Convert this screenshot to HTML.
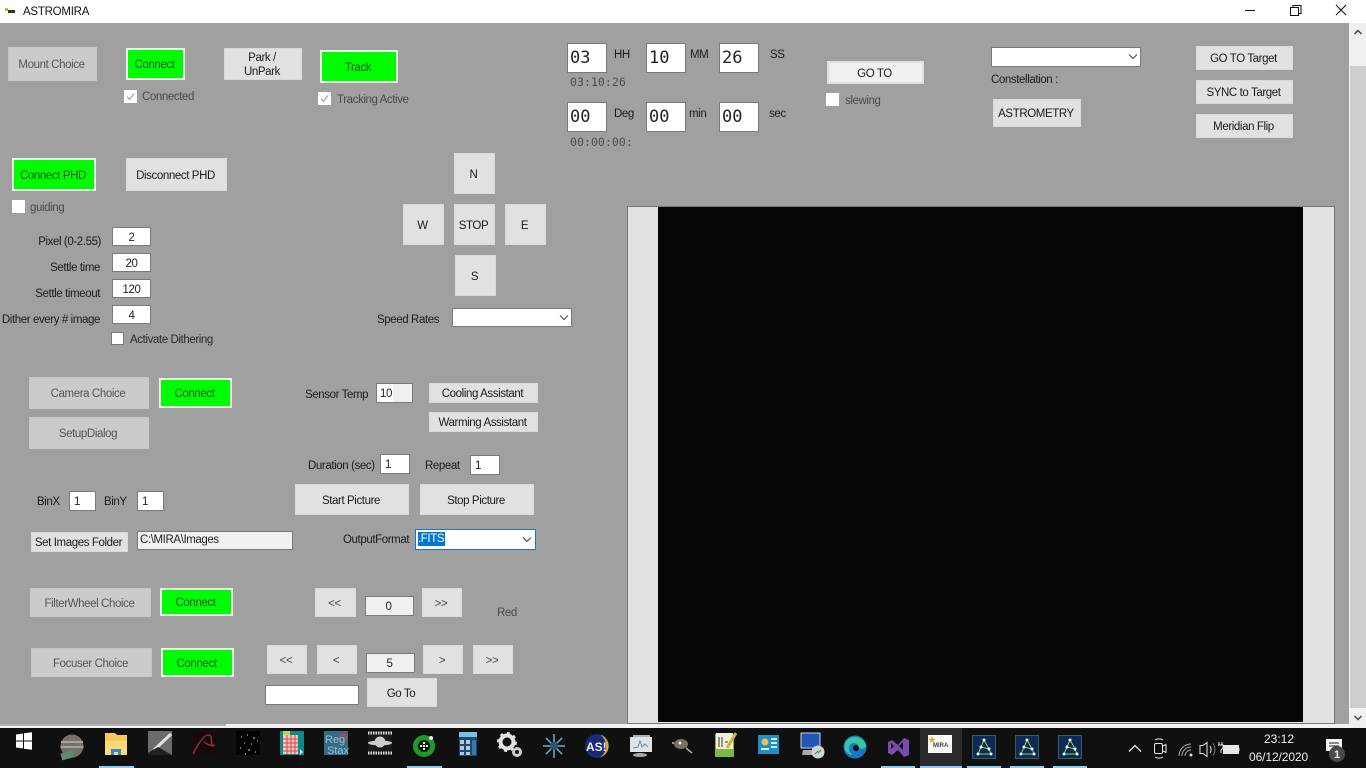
<!DOCTYPE html>
<html><head><meta charset="utf-8"><title>ASTROMIRA</title>
<style>
*{box-sizing:border-box}
html,body{margin:0;padding:0;width:1366px;height:768px;overflow:hidden;background:#a0a0a0;font:11.5px "Liberation Sans",sans-serif;letter-spacing:-.4px;color:#111}
div,span,svg{position:absolute}
svg text{letter-spacing:0}
.b{background:#e1e1e1;display:flex;align-items:center;justify-content:center;text-align:center;line-height:14px;color:#1a1a1a;border:1px solid #dadada;white-space:nowrap;padding-right:2px;padding-top:2px}
.d{background:#cbcbcb;color:#555;border-color:#c6c6c6}
.g{background:#00fc00;border:2px solid #e9f3e9;color:#1f5a1f;display:flex;align-items:center;justify-content:center;white-space:nowrap;padding-right:2px;padding-top:2px}
.t{white-space:nowrap;line-height:14px;color:#1c1c1c;margin-top:1px}
.m{color:#4a4a4a}
.i{background:#fff;border:1px solid #7a7a7a;display:flex;align-items:center;justify-content:center;color:#222;white-space:nowrap;padding-top:2px}
.l{justify-content:flex-start;padding-left:4px}
.n{background:#fff;border:1px solid #7a7a7a;font:17px "DejaVu Sans Mono","Liberation Mono",monospace;letter-spacing:0;display:flex;align-items:center;padding-left:2px;color:#222}
.c{background:#fff;width:13px;height:13px}
.cb{background:#fff;border:1px solid #7a7a7a}
.mono{font:11.600px "DejaVu Sans Mono","Liberation Mono",monospace;letter-spacing:0;color:#4e4e4e;white-space:nowrap}
.u{background:#8fcdf0;height:2px;top:766px}
</style></head><body>
<!-- title bar -->
<div style="left:0;top:0;width:1366px;height:23px;background:#fff"></div>
<div style="left:5px;top:8px;width:3px;height:3px;background:#e8a818"></div>
<div style="left:8px;top:10px;width:7px;height:3px;background:#333"></div>
<div class="t" style="left:23px;top:5px;margin-top:0;color:#111;letter-spacing:-.25px">ASTROMIRA</div>
<svg style="left:1239px;top:0" width="127" height="23" fill="none" stroke="#111"><path d="M6 10.500H16"/><path d="M51.500 7.500h8v8h-8zM54 7.500V5.500h8v8h-2.500"/><path d="M97 5l10 10M107 5L97 15" stroke-width="1.100"/></svg>

<!-- scrollbar -->
<div style="left:1349px;top:23px;width:1px;height:705px;background:#f4f4f4"></div>
<div style="left:1350px;top:23px;width:16px;height:705px;background:#f0f0f0"></div>
<div style="left:1350px;top:66px;width:16px;height:642px;background:#cdcdcd"></div>
<svg style="left:1350px;top:23px" width="16" height="705" fill="none" stroke="#444" stroke-width="1.500"><path d="M4.500 11L8 7.500 11.500 11M4.500 693L8 696.500 11.500 693"/></svg>

<!-- bottom edge -->
<div style="left:0;top:724px;width:1349px;height:4px;background:#f2f2f2"></div>
<div style="left:0;top:724px;width:226px;height:2px;background:#b4b4b4"></div>

<!-- mount row -->
<div class="b d" style="left:8px;top:47px;width:89px;height:34px">Mount Choice</div>
<div class="g" style="left:126px;top:48px;width:59px;height:32px">Connect</div>
<div class="b" style="left:224px;top:48px;width:78px;height:32px">Park /<br>UnPark</div>
<div class="g" style="left:320px;top:50px;width:78px;height:33px">Track</div>
<div class="c" style="left:124px;top:90px"></div>
<svg style="left:124px;top:90px" width="13" height="13" fill="none" stroke="#a8a8a8" stroke-width="1.300"><path d="M3 6.500L5.500 9.500 10 3.500"/></svg>
<div class="t m" style="left:142px;top:89px">Connected</div>
<div class="c" style="left:318px;top:92px"></div>
<svg style="left:318px;top:92px" width="13" height="13" fill="none" stroke="#a8a8a8" stroke-width="1.300"><path d="M3 6.500L5.500 9.500 10 3.500"/></svg>
<div class="t m" style="left:337px;top:92px">Tracking Active</div>

<!-- PHD -->
<div class="g" style="left:12px;top:158px;width:84px;height:33px">Connect PHD</div>
<div class="b" style="left:126px;top:158px;width:101px;height:33px">Disconnect PHD</div>
<div class="c" style="left:12px;top:200px"></div>
<div class="t m" style="left:30px;top:200px">guiding</div>

<div class="t" style="right:1265px;top:234px">Pixel (0-2.55)</div>
<div class="t" style="right:1266px;top:260px">Settle time</div>
<div class="t" style="right:1266px;top:286px">Settle timeout</div>
<div class="t" style="right:1266px;top:312px">Dither every # image</div>
<div class="i" style="left:112px;top:227px;width:39px;height:19px">2</div>
<div class="i" style="left:112px;top:253px;width:39px;height:19px">20</div>
<div class="i" style="left:112px;top:279px;width:39px;height:19px">120</div>
<div class="i" style="left:112px;top:305px;width:39px;height:19px">4</div>
<div class="c cb" style="left:111px;top:332px"></div>
<div class="t" style="left:130px;top:332px;color:#2a2a2a">Activate Dithering</div>

<!-- direction -->
<div class="b" style="left:454px;top:153px;width:41px;height:41px">N</div>
<div class="b" style="left:403px;top:204px;width:41px;height:41px">W</div>
<div class="b" style="left:454px;top:204px;width:41px;height:41px">STOP</div>
<div class="b" style="left:505px;top:204px;width:41px;height:41px">E</div>
<div class="b" style="left:455px;top:255px;width:41px;height:41px">S</div>
<div class="t" style="left:377px;top:312px">Speed Rates</div>
<div class="i" style="left:452px;top:308px;width:120px;height:19px"></div>
<svg style="left:558px;top:314px" width="12" height="8" fill="none" stroke="#444"><path d="M2 1.500L6 5.500 10 1.500"/></svg>

<!-- camera -->
<div class="b d" style="left:29px;top:377px;width:120px;height:32px">Camera Choice</div>
<div class="g" style="left:159px;top:378px;width:73px;height:30px">Connect</div>
<div class="b d" style="left:29px;top:417px;width:120px;height:32px">SetupDialog</div>
<div class="t" style="left:305px;top:387px">Sensor Temp</div>
<div class="i l" style="left:376px;top:383px;width:37px;height:20px;background:linear-gradient(90deg,#fff 45%,#f0f0f0 46%);padding-left:3px">10</div>
<div class="b" style="left:429px;top:383px;width:109px;height:20px">Cooling Assistant</div>
<div class="b" style="left:429px;top:412px;width:109px;height:20px">Warming Assistant</div>
<div class="t" style="left:308px;top:458px">Duration (sec)</div>
<div class="i l" style="left:380px;top:454px;width:30px;height:20px">1</div>
<div class="t" style="left:425px;top:458px">Repeat</div>
<div class="i l" style="left:470px;top:455px;width:30px;height:20px">1</div>
<div class="b" style="left:295px;top:484px;width:114px;height:31px">Start Picture</div>
<div class="b" style="left:420px;top:484px;width:114px;height:31px">Stop Picture</div>
<div class="t" style="left:37px;top:494px">BinX</div>
<div class="i l" style="left:69px;top:491px;width:27px;height:20px">1</div>
<div class="t" style="left:104px;top:494px">BinY</div>
<div class="i l" style="left:137px;top:491px;width:27px;height:20px">1</div>
<div class="b" style="left:31px;top:532px;width:97px;height:20px">Set Images Folder</div>
<div class="i l" style="left:137px;top:531px;width:156px;height:19px;background:#f0f0f0;padding-left:2px;padding-top:0;padding-bottom:2px">C:\MIRA\Images</div>
<div class="t" style="left:343px;top:532px">OutputFormat</div>
<div class="i" style="left:415px;top:529px;width:121px;height:21px;border-color:#1a78b8"></div>
<div style="left:418px;top:532px;width:27px;height:14px;background:#0078d7;color:#fff;line-height:14px;white-space:nowrap">.FITS</div>
<svg style="left:521px;top:536px" width="12" height="8" fill="none" stroke="#444"><path d="M2 1.500L6 5.500 10 1.500"/></svg>

<!-- filter / focuser -->
<div class="b d" style="left:30px;top:588px;width:121px;height:29px">FilterWheel Choice</div>
<div class="g" style="left:160px;top:588px;width:73px;height:28px">Connect</div>
<div class="b d" style="left:31px;top:648px;width:121px;height:29px">Focuser Choice</div>
<div class="g" style="left:161px;top:648px;width:73px;height:29px">Connect</div>
<div class="b" style="left:315px;top:588px;width:41px;height:29px;color:#444">&lt;&lt;</div>
<div class="i" style="left:365px;top:596px;width:49px;height:20px;background:#f0f0f0;padding-right:2px">0</div>
<div class="b" style="left:422px;top:588px;width:40px;height:29px;color:#444">&gt;&gt;</div>
<div class="t m" style="left:497px;top:605px">Red</div>
<div class="b" style="left:267px;top:645px;width:40px;height:29px;color:#444">&lt;&lt;</div>
<div class="b" style="left:317px;top:645px;width:40px;height:29px;color:#444">&lt;</div>
<div class="i" style="left:366px;top:653px;width:49px;height:20px;background:#f0f0f0;padding-right:2px">5</div>
<div class="b" style="left:423px;top:645px;width:40px;height:29px;color:#444">&gt;</div>
<div class="b" style="left:473px;top:645px;width:40px;height:29px;color:#444">&gt;&gt;</div>
<div class="i" style="left:265px;top:685px;width:94px;height:20px"></div>
<div class="b" style="left:367px;top:678px;width:70px;height:29px">Go To</div>

<!-- coordinates -->
<div class="n" style="left:567px;top:43px;width:40px;height:30px">03</div>
<div class="t" style="left:614px;top:47px">HH</div>
<div class="n" style="left:646px;top:43px;width:40px;height:30px">10</div>
<div class="t" style="left:690px;top:47px">MM</div>
<div class="n" style="left:719px;top:43px;width:40px;height:30px">26</div>
<div class="t" style="left:770px;top:47px">SS</div>
<div class="mono" style="left:570px;top:75px">03:10:26</div>
<div class="n" style="left:567px;top:102px;width:40px;height:30px">00</div>
<div class="t" style="left:614px;top:106px">Deg</div>
<div class="n" style="left:646px;top:102px;width:40px;height:30px">00</div>
<div class="t" style="left:689px;top:106px">min</div>
<div class="n" style="left:719px;top:102px;width:40px;height:30px">00</div>
<div class="t" style="left:769px;top:106px">sec</div>
<div class="mono" style="left:570px;top:135px">00:00:00:</div>
<div class="b" style="left:827px;top:61px;width:97px;height:23px;background:#f0f0f0;border:2px solid #e0e0e0">GO TO</div>
<div class="c" style="left:826px;top:93px"></div>
<div class="t m" style="left:845px;top:93px">slewing</div>

<div class="i" style="left:991px;top:47px;width:150px;height:20px"></div>
<svg style="left:1127px;top:53px" width="12" height="8" fill="none" stroke="#444"><path d="M2 1.500L6 5.500 10 1.500"/></svg>
<div class="t" style="left:991px;top:72px">Constellation :</div>
<div class="b" style="left:993px;top:99px;width:88px;height:28px">ASTROMETRY</div>
<div class="b" style="left:1196px;top:46px;width:97px;height:24px">GO TO Target</div>
<div class="b" style="left:1196px;top:80px;width:97px;height:24px">SYNC to Target</div>
<div class="b" style="left:1196px;top:114px;width:97px;height:24px">Meridian Flip</div>

<!-- picture -->
<div style="left:627px;top:206px;width:708px;height:518px;background:#e1e1e1;border:1px solid #777"></div>
<div style="left:658px;top:207px;width:645px;height:515px;background:#060606"></div>

<!-- taskbar -->
<div style="left:0;top:728px;width:1366px;height:40px;background:#101010"></div>
<div style="left:920px;top:728px;width:42px;height:40px;background:#2b2b2b"></div>
<div class="u" style="left:99px;width:35px"></div>
<div class="u" style="left:407px;width:35px"></div>
<div class="u" style="left:881px;width:34px"></div>
<div class="u" style="left:920px;width:42px"></div>
<div class="u" style="left:967px;width:34px"></div>
<div class="u" style="left:1010px;width:34px"></div>
<div class="u" style="left:1053px;width:34px"></div>

<svg style="left:0;top:728px" width="1366" height="40">
<!-- windows -->
<path d="M16 6.500l7-1v7h-7zM24 5.300l8-1.100v8.300h-8zM16 13.500h7v7l-7-1zM24 13.500h8v8.300l-8-1.100z" fill="#fff"/>
<!-- jupiter -->
<circle cx="72" cy="18" r="11.500" fill="#77706a"/><path d="M61 14h22M60.500 19h23" stroke="#a8a39c" stroke-width="2"/><rect x="61" y="24" width="13" height="7" fill="#5c8a72" transform="rotate(-15 67 27)"/>
<!-- folder -->
<path d="M105 5h10l2 2h10v20h-22z" fill="#f6c95c"/><path d="M105 13h22v14h-22z" fill="#fbd978"/><path d="M111 27v-6h10v6h-3v-3h-4v3z" fill="#2f8ac8"/>
<!-- comet -->
<rect x="148" y="3" width="24" height="24" fill="#6b6b6b"/><path d="M154 22L171 6" stroke="#e4e4e4" stroke-width="3"/><path d="M148 25l10-6 14 8h-24z" fill="#222"/>
<!-- red curve -->
<rect x="192" y="3" width="24" height="24" fill="#180a0c"/><path d="M193 26C198 16 204 6 209 7c4 1 1 8 4 12M204 14c4 3 8 4 11 3" fill="none" stroke="#8c3038" stroke-width="1.500"/>
<!-- stars -->
<rect x="236" y="3" width="24" height="24" fill="#040404"/><path d="M241 9h1M247 7h1M253 10h2M244 15h1M251 16h1M257 13h1M240 20h1M248 22h2M255 24h1M245 26h1" stroke="#ddd"/>
<!-- grid -->
<rect x="280" y="3" width="24" height="24" fill="#0c8b86"/><rect x="283" y="7" width="15" height="19" fill="#f0c8c8"/><path d="M283 11h15M283 15h15M283 19h15M283 23h15M287 7v19M291 7v19M295 7v19" stroke="#d84848" stroke-width="1"/><rect x="283" y="3" width="7" height="4" fill="#b8d850"/><path d="M300 21l3 3-3 3z" fill="#dde"/>
<!-- registax -->
<rect x="324" y="3" width="24" height="24" fill="#3a6a80"/><circle cx="343" cy="10" r="3.500" fill="none" stroke="#c04858" stroke-width="1.500"/>
<text x="325" y="15" font-family="Liberation Sans,sans-serif" font-size="11" fill="#7fc8e8">Reg</text><text x="327" y="26" font-family="Liberation Sans,sans-serif" font-size="11" fill="#7fc8e8">Stax</text>
<!-- saturn -->
<rect x="368" y="3" width="24" height="24" fill="#1a1a1a"/><path d="M368 5h24M368 25h24" stroke="#ddd" stroke-width="3" stroke-dasharray="1.500 1"/><ellipse cx="380" cy="15" rx="12" ry="2.500" fill="#ccc"/><circle cx="380" cy="14" r="5.500" fill="#ccc"/>
<!-- green ring -->
<circle cx="424" cy="18" r="11" fill="#1f9a2a"/><circle cx="424" cy="18" r="6" fill="#0c1a0c"/><path d="M420 18h8M424 14v8" stroke="#ddd" stroke-dasharray="2 1" stroke-width="2"/><circle cx="431" cy="10" r="2" fill="#eee"/>
<!-- calculator -->
<rect x="459" y="4" width="18" height="24" fill="#1c4a70"/><rect x="459" y="4" width="18" height="5" fill="#7fc0e0"/><path d="M460 12h4v4h-4zM466 12h4v4h-4zM460 18h4v4h-4zM466 18h4v4h-4zM460 24h4v3h-4zM466 24h4v3h-4z" fill="#b8c8d4"/><path d="M472 12h4v15h-4z" fill="#3878a8"/>
<!-- gears -->
<circle cx="507" cy="14" r="6.500" fill="none" stroke="#dfe3e6" stroke-width="4"/><circle cx="517" cy="24" r="3.500" fill="none" stroke="#c9cdd0" stroke-width="3"/><circle cx="507" cy="14" r="9" fill="none" stroke="#dfe3e6" stroke-width="2" stroke-dasharray="3 4"/>
<!-- star -->
<path d="M554 6v24M543 18h22M546 10l16 16M562 10l-16 16" stroke="#6fb0c8" stroke-width="1.500"/><circle cx="554" cy="18" r="4" fill="#2a5868"/>
<!-- AS! -->
<circle cx="597" cy="18" r="12" fill="#1a2a78"/><path d="M600 6.500a12 12 0 0 1 0 23a14 14 0 0 0 0-23z" fill="#d8a838"/><text x="586" y="23" font-family="Liberation Sans,sans-serif" font-size="12" font-weight="bold" fill="#f0f0f0">AS!</text>
<!-- monitor -->
<rect x="633" y="7" width="17" height="15" fill="#b0b0b0"/><rect x="630" y="9" width="22" height="15" fill="#dfe4e8"/><path d="M633 20l5-1 2-6 2 6 3-3 3 3" fill="none" stroke="#6a8aa8"/><ellipse cx="640" cy="27" rx="7" ry="2" fill="#aaa"/>
<!-- gimp -->
<ellipse cx="681" cy="16" rx="7" ry="5" fill="#77705c"/><circle cx="673" cy="15" r="1" fill="#bbb"/><circle cx="680" cy="15" r="1.500" fill="#eee"/><path d="M686 20l6 5" stroke="#aaa" stroke-width="1.500"/>
<!-- notepad -->
<rect x="715" y="6" width="19" height="23" fill="#7cb848"/><rect x="716" y="5" width="17" height="16" fill="#f0f0d8"/><path d="M719 9v10M722 9v10M725 14h3" stroke="#333"/><path d="M727 20l9-15" stroke="#d8b030" stroke-width="3"/>
<!-- blue card -->
<rect x="758" y="7" width="21" height="19" fill="#1f8ecb"/><circle cx="765" cy="14" r="3.500" fill="#f0c040"/><path d="M771 11h6M771 15h6M771 19h6M761 21h8" stroke="#d8eef8" stroke-width="2"/>
<!-- remote -->
<rect x="801" y="5" width="19" height="15" fill="#2058b8"/><rect x="801" y="5" width="19" height="15" fill="none" stroke="#c8d4e8"/><path d="M803 22h16l2 5h-19z" fill="#aaa"/><circle cx="818" cy="24" r="6.500" fill="#cfd4d0"/><path d="M815 26l3-3M818 25l3-3" stroke="#3a8a3a"/>
<!-- edge -->
<circle cx="855" cy="19" r="11.500" fill="#1578c8"/><path d="M845 15a11.500 11.500 0 0 1 21 2c0 5-8 5-8 1 0-2-4-4-7-2-3 2-3 8 2 11-6 0-10-6-8-12z" fill="#38c8a0"/><circle cx="856" cy="20" r="3" fill="#101010"/>
<!-- vs -->
<path d="M888 14l4-2 6 5 6-7 5 2v15l-5 2-6-7-6 5-4-2z" fill="#7a4cb0"/><path d="M891 15v6l3-3zM903 14l-4 4 4 4z" fill="#101010"/>
<!-- mira -->
<rect x="928" y="7" width="24" height="18" fill="#fafafa"/><path d="M932 8l1 2.500 2.500.5-2 1.500.5 2.500-2-1.500-2 1.500.5-2.500-2-1.500 2.500-.5z" fill="#e8b020"/>
<text x="933" y="19" font-family="Liberation Sans,sans-serif" font-size="6" font-weight="bold" fill="#444">MIRA</text>
</svg>
<svg style="left:972px;top:735px" width="110" height="26">
<g fill="none">
<rect x="0.500" y="0.500" width="23" height="23" fill="#0c2a58" stroke="#3e5a5a"/><path d="M6 19L12 5l5 9 2 5M6 19h13M9 12l8 2" stroke="#9ac84a"/><path d="M6 19h.01M12 5h.01M17 14h.01M19 19h.01M9 12h.01" stroke="#dff" stroke-width="3" stroke-linecap="round"/>
<rect x="43.500" y="0.500" width="23" height="23" fill="#0c2a58" stroke="#3e5a5a"/><path d="M49 19L55 5l5 9 2 5M49 19h13M52 12l8 2" stroke="#9ac84a"/><path d="M49 19h.01M55 5h.01M60 14h.01M62 19h.01M52 12h.01" stroke="#dff" stroke-width="3" stroke-linecap="round"/>
<rect x="86.500" y="0.500" width="23" height="23" fill="#0c2a58" stroke="#3e5a5a"/><path d="M92 19L98 5l5 9 2 5M92 19h13M95 12l8 2" stroke="#9ac84a"/><path d="M92 19h.01M98 5h.01M103 14h.01M105 19h.01M95 12h.01" stroke="#dff" stroke-width="3" stroke-linecap="round"/>
</g></svg>

<!-- tray -->
<svg style="left:1125px;top:736px" width="220" height="28" fill="none" stroke="#e8e8e8">
<path d="M4 15.500L10 9.500 16 15.500" stroke-width="1.300"/>
<rect x="29.500" y="7.500" width="8" height="10" rx="1.500"/><path d="M38 10l3-1.500v8L38 15M30 4c2-1.500 6-1.500 8 0M30 21c2 1.500 6 1.500 8 0"/>
<path d="M54 20a12 12 0 0 1 12-12M57 20a9 9 0 0 1 9-9M60 20a6 6 0 0 1 6-6" stroke="#aaa"/><circle cx="66" cy="19" r="1.500" fill="#ddd" stroke="none"/>
<path d="M75 9.500h3l4-3v14l-4-3h-3zM85 10c1.500 2 1.500 5 0 7" /><path d="M88 7.500c2.500 3.500 2.500 8.500 0 12" stroke="#777"/>
<rect x="98.500" y="9.500" width="15" height="8" fill="#e8e8e8"/><path d="M114 12v3"/><path d="M94 6v3M97 6v3M93 9h5v3l-2 2v3" />
</svg>
<div class="t" style="left:1264px;top:732px;margin-top:0;color:#eee;letter-spacing:0;font-size:12px">23:12</div>
<div class="t" style="left:1249px;top:750px;margin-top:0;color:#eee;letter-spacing:-.1px;font-size:12px">06/12/2020</div>
<svg style="left:1325px;top:736px" width="41" height="32">
<path d="M1 3h16v12H9l-3 3v-3H1z" fill="#f4f4f4"/><path d="M4 7h10M4 10h10" stroke="#222"/>
<circle cx="12" cy="18" r="8" fill="#4a4a4a"/>
<text x="9" y="22" font-family="Liberation Sans,sans-serif" font-size="11" font-weight="bold" fill="#eee">1</text>
</svg>
</body></html>
